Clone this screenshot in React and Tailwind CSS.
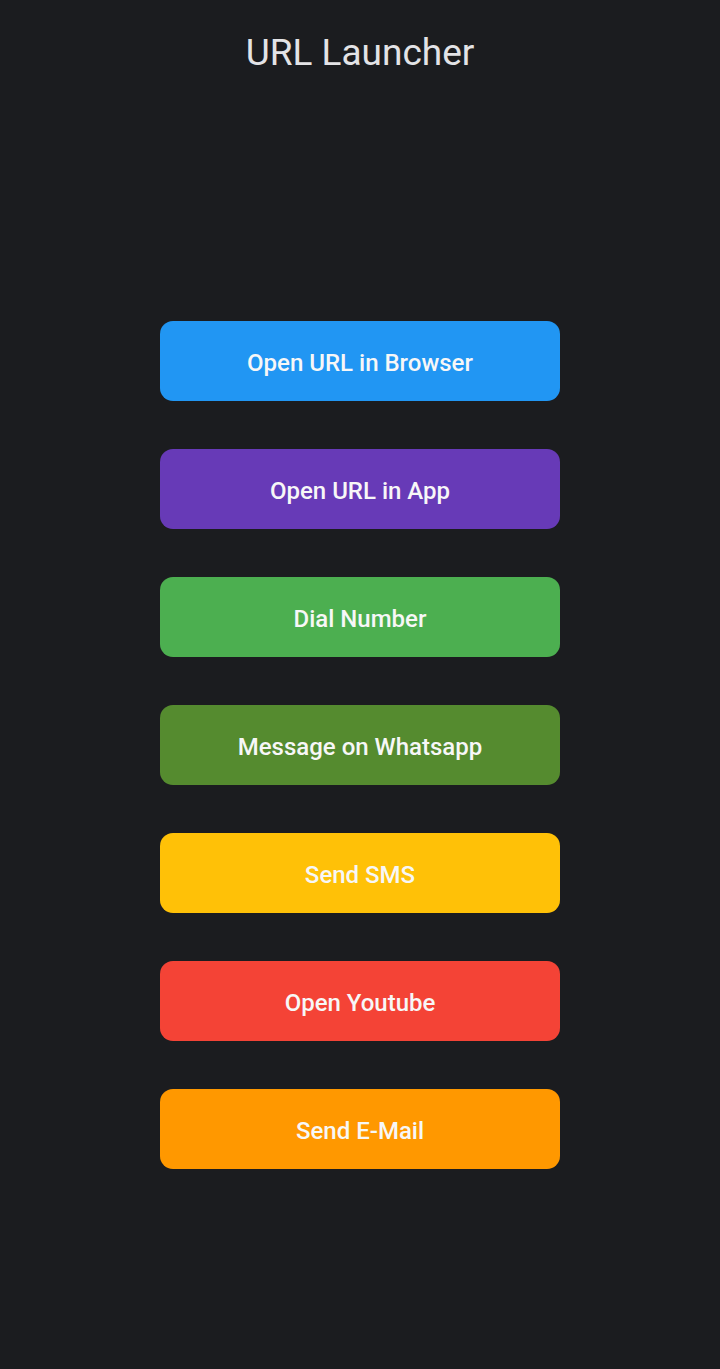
import React from 'react';

const actions = [
  { label: 'Open URL in Browser', color: 'bg-[#2196f3]' },
  { label: 'Open URL in App', color: 'bg-[#673ab7]' },
  { label: 'Dial Number', color: 'bg-[#4caf50]' },
  { label: 'Message on Whatsapp', color: 'bg-[#558b2f]' },
  { label: 'Send SMS', color: 'bg-[#ffc107]' },
  { label: 'Open Youtube', color: 'bg-[#f44336]' },
  { label: 'Send E-Mail', color: 'bg-[#ff9800]' },
];

export default function App() {
  return (
    <div className="min-h-[1369px] w-full bg-[#1b1c1f] font-['Roboto',sans-serif]">
      {/* App bar */}
      <header className="h-[104px] flex items-center justify-center">
        <h1 className="text-[37px] font-normal text-[#e3e3e6] leading-none">URL Launcher</h1>
      </header>

      <main className="flex flex-col items-center gap-12 pt-[217px]">
        {actions.map((a) => (
          <button
            key={a.label}
            className={`w-[400px] h-20 rounded-[13px] ${a.color} text-[24px] font-medium text-[#f7f7f7] flex items-center justify-center pt-[4px]`}
          >
            {a.label}
          </button>
        ))}
      </main>
    </div>
  );
}
